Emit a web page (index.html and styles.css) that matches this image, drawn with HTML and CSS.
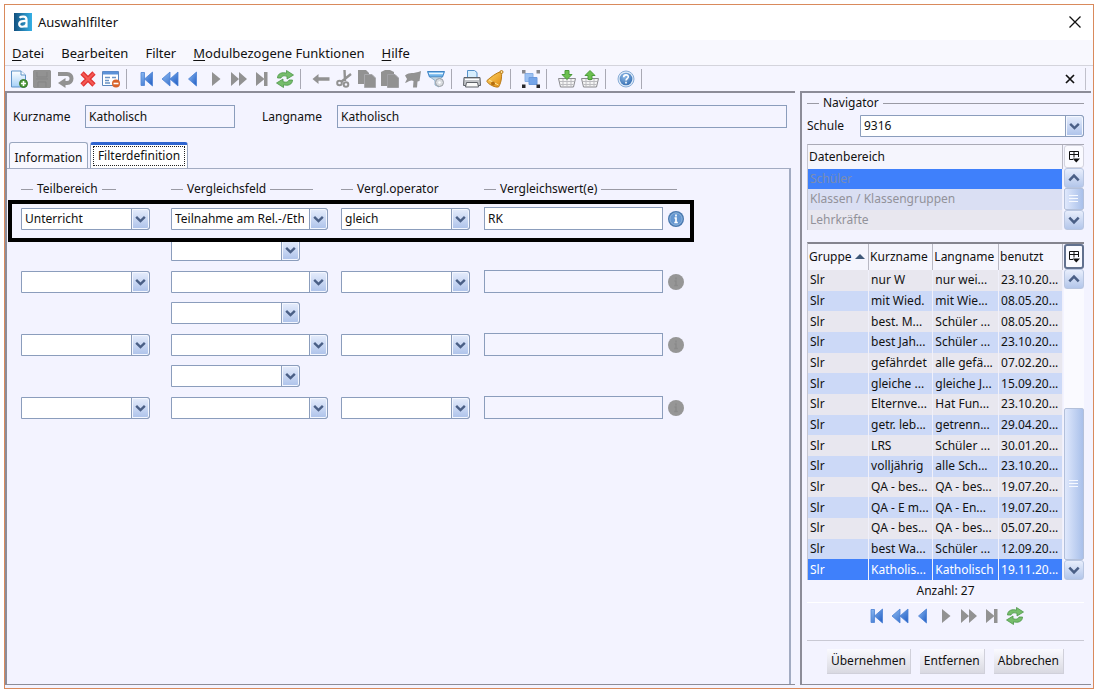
FILE: index.html
```html
<!DOCTYPE html>
<html lang="de">

<head>
  <meta charset="UTF-8">
  <meta name="viewport" content="width=device-width, initial-scale=1.0">
  <title>Auswahlfilter</title>
  <link rel="stylesheet" href="styles.css">
</head>

<body>
  <!-- icon sprite -->
  <svg class="sprite" aria-hidden="true">
    <defs>
      <linearGradient id="g-blue" x1="0" y1="0" x2="1" y2="1">
        <stop offset="0" stop-color="#8fbcf2"></stop>
        <stop offset="1" stop-color="#1f5cc4"></stop>
      </linearGradient>
      <linearGradient id="g-page" x1="0" y1="0" x2="0" y2="1">
        <stop offset="0" stop-color="#fff"></stop>
        <stop offset="1" stop-color="#a4d0f8"></stop>
      </linearGradient>
      <linearGradient id="g-logo" x1="0" y1="0" x2="1" y2="0">
        <stop offset="0" stop-color="#12507e"></stop>
        <stop offset="1" stop-color="#35b0e6"></stop>
      </linearGradient>
      <linearGradient id="g-gold" x1="0" y1="0" x2="1" y2="1">
        <stop offset="0" stop-color="#ffd86a"></stop>
        <stop offset="1" stop-color="#e08a10"></stop>
      </linearGradient>
      <radialGradient id="g-ball" cx=".4" cy=".3" r=".8">
        <stop offset="0" stop-color="#8fbbe8"></stop>
        <stop offset="1" stop-color="#2f68ae"></stop>
      </radialGradient>
    </defs>
    <symbol id="i-logo" viewBox="0 0 18 18">
      <path d="M0 0h18v18H0z" fill="url(#g-logo)"></path>
      <path d="M5.500 4.700C7 3.300 12.500 2.500 12.500 6.500v8M12.500 8C9 7.800 5.200 8.100 5.200 11.100c0 3.600 5.800 3.400 7.300 0" fill="none" stroke="#fff" stroke-width="2.200"></path>
    </symbol>
    <symbol id="i-new" viewBox="0 0 18 18">
      <path d="M1.500 1h9.500l4.500 4v12h-14z" fill="url(#g-page)" stroke="#5f93c8"></path>
      <path d="M11 1v4h4.500" fill="#fff" stroke="#5f93c8"></path>
      <circle cx="13.500" cy="13.500" r="4" fill="#4d9a38" stroke="#37752a"></circle>
      <path d="M13.500 11v5M11 13.500h5" stroke="#fff" stroke-width="1.600"></path>
    </symbol>
    <symbol id="i-save" viewBox="0 0 18 18">
      <path d="M1 0h16l1 1v16l-1 1H1l-1-1V1z" fill="#929292"></path>
      <path d="M3 9h12M4 2v5h10V2M5 17v-5h8v5" fill="none" stroke="#858585"></path>
    </symbol>
    <symbol id="i-undo" viewBox="0 0 18 18">
      <path d="M2 4h9c6 0 6 9 0 9H9" fill="none" stroke="#929292" stroke-width="4"></path>
      <path d="M2 13l7.500-5v10z" fill="#929292"></path>
    </symbol>
    <symbol id="i-delete" viewBox="0 0 18 18">
      <path d="M3 3l12 12M15 3L3 15" stroke="#e23434" stroke-width="4.600"></path>
      <path d="M3.500 3.500l11 11M14.500 3.500l-11 11" stroke="#f55a55" stroke-width="2"></path>
    </symbol>
    <symbol id="i-form" viewBox="0 0 18 18">
      <path d="M.5 1.500h16v14H.5z" fill="#fff" stroke="#5b86bd"></path>
      <path d="M1 3h15" stroke="#5b91d8" stroke-width="3"></path>
      <path d="M3 7.500h5M3 10.500h4M10 7.500h4M3 13h5" stroke="#6b93c4" stroke-width="1.500"></path>
      <circle cx="14" cy="13.500" r="4" fill="#d9632a"></circle>
      <path d="M11.500 13.500h5" stroke="#fff" stroke-width="1.600"></path>
    </symbol>
    <symbol id="i-first" viewBox="0 0 18 18">
      <path d="M3 2.500h3.500v13H3zM14.500 2v14L6.500 9z" fill="url(#g-blue)" stroke="#4b82d4" stroke-width=".8"></path>
    </symbol>
    <symbol id="i-rewind" viewBox="0 0 18 18">
      <path d="M9 2v14L1 9zM17 2v14L9 9z" fill="url(#g-blue)" stroke="#4b82d4" stroke-width=".8"></path>
    </symbol>
    <symbol id="i-prev" viewBox="0 0 18 18">
      <path d="M12.500 2v14L4.500 9z" fill="url(#g-blue)" stroke="#4b82d4" stroke-width=".8"></path>
    </symbol>
    <symbol id="i-next" viewBox="0 0 18 18">
      <path d="M5 2v14l8.500-7z" fill="#929292"></path>
    </symbol>
    <symbol id="i-forward" viewBox="0 0 18 18">
      <path d="M1 2v14l8-7zM9 2v14l8-7z" fill="#929292"></path>
    </symbol>
    <symbol id="i-last" viewBox="0 0 18 18">
      <path d="M3 2v14l8.500-7zM11 2h3.500v14H11z" fill="#929292"></path>
    </symbol>
    <symbol id="i-refresh" viewBox="0 0 18 18">
      <path d="M1.500 8C1.500 3.500 6 1.800 10.500 3.200V.5L17.500 5l-6.500 4V6.300C8 5.300 5.500 5.800 5 8z" fill="#76bd6b" stroke="#4b9647" stroke-width=".8"></path>
      <path d="M16.500 10c0 4.500-4.500 6.200-9 4.800v2.700L.5 13 7 9v2.700c3 1 5.500.5 6-1.700z" fill="#76bd6b" stroke="#4b9647" stroke-width=".8"></path>
    </symbol>
    <symbol id="i-back" viewBox="0 0 18 18">
      <path d="M.5 9l6-5v3.200h11v3.600h-11V14z" fill="#929292"></path>
    </symbol>
    <symbol id="i-cut" viewBox="0 0 18 18">
      <path d="M9.500 0L10 11M16 4L6 12" stroke="#929292" stroke-width="2.400"></path>
      <circle cx="4.500" cy="13" r="2.300" fill="none" stroke="#929292" stroke-width="2"></circle>
      <circle cx="11" cy="14.500" r="2.300" fill="none" stroke="#929292" stroke-width="2"></circle>
    </symbol>
    <symbol id="i-copy" viewBox="0 0 18 18">
      <path d="M0 0h8l3 3v11H0z" fill="#929292"></path>
      <path d="M6.500 4.500H14L17.500 8v9.500h-11z" fill="#929292" stroke="#a9a9ad"></path>
    </symbol>
    <symbol id="i-paste" viewBox="0 0 18 18">
      <path d="M0 2l4-2h5l4 2v14H0z" fill="#929292"></path>
      <path d="M6.500 4.500H14L17.500 8v9.500h-11z" fill="#929292" stroke="#a0a0a4"></path>
    </symbol>
    <symbol id="i-flag" viewBox="0 0 18 18">
      <path d="M1 5.500C6 1.500 9 4.500 17 1l-1.500 10-2 .5-.5 6H9l.5-6.500C7 9.500 5 11.500 1 13l2-4z" fill="#929292"></path>
    </symbol>
    <symbol id="i-filter" viewBox="0 0 18 18">
      <path d="M.5 1.500h17l-2 5.500h-13z" fill="#6fb4ea" stroke="#3f83c4"></path>
      <path d="M2 3.500h14" stroke="#e8f6ff" stroke-width="1.500"></path>
      <path d="M3 7h12l-3 3.500V17l-4-2v-4.500z" fill="#c5d5e0" stroke="#6d9cc0" stroke-width=".7"></path>
      <circle cx="12.500" cy="12.500" r="4" fill="#d9dce0" stroke="#9a9ea4"></circle>
      <circle cx="12.500" cy="12.500" r="1.200" fill="#fff"></circle>
    </symbol>
    <symbol id="i-print" viewBox="0 0 18 18">
      <path d="M4.500 8V.5h7l2.500 2V8z" fill="#d7eefe" stroke="#5692ca"></path>
      <path d="M1 7.500h16l.5 8H.5z" fill="#c3c5c9" stroke="#5e6268"></path>
      <path d="M2 9.500h14" stroke="#fff"></path>
      <path d="M3.500 12.500h11l1 4.500h-13z" fill="#fafafa" stroke="#5e6268"></path>
    </symbol>
    <symbol id="i-bell" viewBox="0 0 18 18">
      <path d="M15 1.500C10 3 5 7 1 10.500c-1.500 2 7.500 7.500 11.500 6.500 2-3 3.500-8 3-15z" fill="url(#g-gold)" stroke="#b97a18"></path>
      <path d="M3 10l9.500 5" stroke="#ffe99c"></path>
      <circle cx="15.500" cy="2" r="1.500" fill="#fbe3a0" stroke="#b97a18"></circle>
      <circle cx="7" cy="13.500" r="2" fill="#b56f10"></circle>
    </symbol>
    <symbol id="i-bounds" viewBox="0 0 18 18">
      <path d="M3 3.500h8v8H3z" fill="#9cc1f2" stroke="#86aee6"></path>
      <path d="M7 7.500h8v7H7z" fill="#74a4e8" stroke="#6a98dc"></path>
      <path d="M0 0h3.500v3.500H0zM14.500 0H18v3.500h-3.500z" fill="#86868c"></path>
      <path d="M0 14.500h3.500V18H0zM14.500 14.500H18V18h-3.500z" fill="#26262a"></path>
    </symbol>
    <symbol id="i-basket" viewBox="0 0 18 18">
      <path d="M.5 8.500h17l-2 8.500h-13z" fill="#f4f4f4" stroke="#8a8a8e"></path>
      <path d="M2 11.500h14M2.500 14.500h13M5 9v8M9 9v8M13 9v8" stroke="#bcbcc0"></path>
    </symbol>
    <symbol id="i-basket-in" viewBox="0 0 18 18">
      <use href="#i-basket"></use>
      <path d="M7 .5h4v4h3l-5 5-5-5h3z" fill="#6cc04f" stroke="#4a9a3a"></path>
    </symbol>
    <symbol id="i-basket-out" viewBox="0 0 18 18">
      <use href="#i-basket"></use>
      <path d="M7 9.500h4V5.500h3l-5-5-5 5h3z" fill="#6cc04f" stroke="#4a9a3a"></path>
    </symbol>
    <symbol id="i-help" viewBox="0 0 18 18">
      <circle cx="9" cy="9" r="8" fill="#dce9f8" stroke="#8aaed8"></circle>
      <circle cx="9" cy="9" r="6.300" fill="url(#g-ball)"></circle>
      <path d="M6.700 7.300C6.700 4 11.500 4.200 11.300 7 11.200 8.600 9 8.600 9 10.500M9 11.700v1.800" fill="none" stroke="#fff" stroke-width="1.600"></path>
    </symbol>
    <symbol id="i-info" viewBox="0 0 16 16">
      <circle cx="8" cy="8" r="8" fill="#4777ae"></circle>
      <circle cx="8" cy="8" r="6.200" fill="#6496d0" stroke="#a9c8e8" stroke-width=".7"></circle>
      <path d="M8 3.500v2M6.500 7H8v4.500M6.300 11.500h3.500" fill="none" stroke="#fff" stroke-width="1.700"></path>
    </symbol>
    <symbol id="i-info-off" viewBox="0 0 16 16">
      <circle cx="8" cy="8" r="8" fill="#969696"></circle>
      <path d="M8 3.500v2M6.500 7H8v4.500M6.300 11.500h3.500" fill="none" stroke="#8a8a8a" stroke-width="1.500"></path>
    </symbol>
    <symbol id="i-columns" viewBox="0 0 12 12">
      <path d="M5 8.500H1.500v-8h9V6M1.500 3.500h9M6 .5v6" fill="none" stroke="#111"></path>
      <path d="M4.500 7.500H12L8.300 11.500z" fill="#111"></path>
    </symbol>
    <symbol id="i-down" viewBox="0 0 12 12">
      <path d="M2 4l4 4 4-4" fill="none" stroke="#4a5f86" stroke-width="2.200"></path>
    </symbol>
    <symbol id="i-up" viewBox="0 0 12 12">
      <path d="M2 8l4-4 4 4" fill="none" stroke="#4a5f86" stroke-width="2.200"></path>
    </symbol>
    <symbol id="i-close" viewBox="0 0 12 12">
      <path d="M.5.500l11 11M11.500.5l-11 11" stroke="currentColor" stroke-width="1.300"></path>
    </symbol>
    <symbol id="i-close-small" viewBox="0 0 12 12">
      <path d="M2 2l8 8M10 2l-8 8" stroke="currentColor" stroke-width="1.700"></path>
    </symbol>
  </svg>

  <div class="window">
    <header class="titlebar">
      <svg class="icon"><use href="#i-logo"></use></svg>
      <h1>Auswahlfilter</h1>
      <button class="win-close" aria-label="Fenster schließen"><svg><use href="#i-close"></use></svg></button>
    </header>

    <nav class="menubar">
      <button><u>D</u>atei</button>
      <button>Be<u>a</u>rbeiten</button>
      <button>Filter</button>
      <button><u>M</u>odulbezogene Funktionen</button>
      <button><u>H</u>ilfe</button>
    </nav>

    <div class="toolbar">
      <button aria-label="Neu"><svg class="icon"><use href="#i-new"></use></svg></button>
      <button aria-label="Speichern"><svg class="icon"><use href="#i-save"></use></svg></button>
      <button aria-label="Rückgängig"><svg class="icon"><use href="#i-undo"></use></svg></button>
      <button aria-label="Löschen"><svg class="icon"><use href="#i-delete"></use></svg></button>
      <button aria-label="Maske leeren"><svg class="icon"><use href="#i-form"></use></svg></button>
      <span class="sep"></span>
      <button aria-label="Erster"><svg class="icon"><use href="#i-first"></use></svg></button>
      <button aria-label="Zurückblättern"><svg class="icon"><use href="#i-rewind"></use></svg></button>
      <button aria-label="Voriger"><svg class="icon"><use href="#i-prev"></use></svg></button>
      <button aria-label="Nächster"><svg class="icon"><use href="#i-next"></use></svg></button>
      <button aria-label="Vorblättern"><svg class="icon"><use href="#i-forward"></use></svg></button>
      <button aria-label="Letzter"><svg class="icon"><use href="#i-last"></use></svg></button>
      <button aria-label="Aktualisieren"><svg class="icon"><use href="#i-refresh"></use></svg></button>
      <span class="sep"></span>
      <button aria-label="Zurück"><svg class="icon"><use href="#i-back"></use></svg></button>
      <button aria-label="Ausschneiden"><svg class="icon"><use href="#i-cut"></use></svg></button>
      <button aria-label="Kopieren"><svg class="icon"><use href="#i-copy"></use></svg></button>
      <button aria-label="Einfügen"><svg class="icon"><use href="#i-paste"></use></svg></button>
      <button aria-label="Markieren"><svg class="icon"><use href="#i-flag"></use></svg></button>
      <button aria-label="Filtern"><svg class="icon"><use href="#i-filter"></use></svg></button>
      <span class="sep"></span>
      <button aria-label="Drucken"><svg class="icon"><use href="#i-print"></use></svg></button>
      <button aria-label="Erinnerung"><svg class="icon"><use href="#i-bell"></use></svg></button>
      <span class="sep"></span>
      <button aria-label="Auswahl"><svg class="icon"><use href="#i-bounds"></use></svg></button>
      <span class="sep"></span>
      <button aria-label="In den Korb"><svg class="icon"><use href="#i-basket-in"></use></svg></button>
      <button aria-label="Aus dem Korb"><svg class="icon"><use href="#i-basket-out"></use></svg></button>
      <span class="sep"></span>
      <button aria-label="Hilfe"><svg class="icon"><use href="#i-help"></use></svg></button>
      <span class="sep"></span>
      <button class="tool-close" aria-label="Schließen"><svg><use href="#i-close-small"></use></svg></button>
    </div>

    <div class="content">
      <main class="editor">
        <div class="names">
          <label for="kurzname">Kurzname</label>
          <input class="field short" id="kurzname" value="Katholisch" readonly>
          <label class="second" for="langname">Langname</label>
          <input class="field long" id="langname" value="Katholisch" readonly>
        </div>

        <div class="tabs" role="tablist">
          <button class="tab" role="tab">Information</button>
          <button class="tab active" role="tab" aria-selected="true"><span>Filterdefinition</span></button>
        </div>

        <section class="pane">
          <div class="row legends">
            <div class="legend l-area">Teilbereich</div>
            <div class="legend l-field">Vergleichsfeld</div>
            <div class="legend l-op">Vergl.operator</div>
            <div class="legend l-value">Vergleichswert(e)</div>
          </div>

          <div class="row marked">
            <span class="combo"><select aria-label="Teilbereich"><option>Unterricht</option></select><svg><use href="#i-down"></use></svg></span>
            <span class="combo"><select aria-label="Vergleichsfeld"><option>Teilnahme am Rel.-/Ethikunterricht</option></select><svg><use href="#i-down"></use></svg></span>
            <span class="combo"><select aria-label="Vergleichsoperator"><option>gleich</option></select><svg><use href="#i-down"></use></svg></span>
            <input class="field editable" aria-label="Vergleichswert" value="RK">
            <button class="info" aria-label="Info"><svg><use href="#i-info"></use></svg></button>
          </div>
          <div class="row link">
            <span class="combo"><select aria-label="Verknüpfung"><option></option></select><svg><use href="#i-down"></use></svg></span>
          </div>

          <div class="row">
            <span class="combo"><select aria-label="Teilbereich"><option></option></select><svg><use href="#i-down"></use></svg></span>
            <span class="combo"><select aria-label="Vergleichsfeld"><option></option></select><svg><use href="#i-down"></use></svg></span>
            <span class="combo"><select aria-label="Vergleichsoperator"><option></option></select><svg><use href="#i-down"></use></svg></span>
            <input class="field" aria-label="Vergleichswert" readonly>
            <button class="info" aria-label="Info"><svg><use href="#i-info-off"></use></svg></button>
          </div>
          <div class="row link">
            <span class="combo"><select aria-label="Verknüpfung"><option></option></select><svg><use href="#i-down"></use></svg></span>
          </div>

          <div class="row">
            <span class="combo"><select aria-label="Teilbereich"><option></option></select><svg><use href="#i-down"></use></svg></span>
            <span class="combo"><select aria-label="Vergleichsfeld"><option></option></select><svg><use href="#i-down"></use></svg></span>
            <span class="combo"><select aria-label="Vergleichsoperator"><option></option></select><svg><use href="#i-down"></use></svg></span>
            <input class="field" aria-label="Vergleichswert" readonly>
            <button class="info" aria-label="Info"><svg><use href="#i-info-off"></use></svg></button>
          </div>
          <div class="row link">
            <span class="combo"><select aria-label="Verknüpfung"><option></option></select><svg><use href="#i-down"></use></svg></span>
          </div>

          <div class="row">
            <span class="combo"><select aria-label="Teilbereich"><option></option></select><svg><use href="#i-down"></use></svg></span>
            <span class="combo"><select aria-label="Vergleichsfeld"><option></option></select><svg><use href="#i-down"></use></svg></span>
            <span class="combo"><select aria-label="Vergleichsoperator"><option></option></select><svg><use href="#i-down"></use></svg></span>
            <input class="field" aria-label="Vergleichswert" readonly>
            <button class="info" aria-label="Info"><svg><use href="#i-info-off"></use></svg></button>
          </div>
        </section>
      </main>

      <aside class="navigator">
        <div class="legend">Navigator</div>
        <div class="school">
          <label for="schule">Schule</label>
          <span class="combo"><select id="schule"><option>9316</option></select><svg><use href="#i-down"></use></svg></span>
        </div>

        <div class="list areas">
          <table>
            <thead>
              <tr><th>Datenbereich</th></tr>
            </thead>
            <tbody>
              <tr class="selected"><td>Schüler</td></tr>
              <tr><td>Klassen / Klassengruppen</td></tr>
              <tr><td>Lehrkräfte</td></tr>
            </tbody>
          </table>
          <div class="rail">
            <button class="columns" aria-label="Spalten"><svg><use href="#i-columns"></use></svg></button>
            <button class="step" aria-label="Nach oben"><svg><use href="#i-up"></use></svg></button>
            <div class="track"><div class="thumb"></div></div>
            <button class="step" aria-label="Nach unten"><svg><use href="#i-down"></use></svg></button>
          </div>
        </div>

        <div class="list filters">
          <table>
            <thead>
              <tr><th>Gruppe<i class="sort"></i></th><th>Kurzname</th><th>Langname</th><th>benutzt</th></tr>
            </thead>
            <tbody>
              <tr><td>Slr</td><td>nur W</td><td>nur wei...</td><td>23.10.20...</td></tr>
              <tr><td>Slr</td><td>mit Wied.</td><td>mit Wie...</td><td>08.05.20...</td></tr>
              <tr><td>Slr</td><td>best. M...</td><td>Schüler ...</td><td>08.05.20...</td></tr>
              <tr><td>Slr</td><td>best Jah...</td><td>Schüler ...</td><td>23.10.20...</td></tr>
              <tr><td>Slr</td><td>gefährdet</td><td>alle gefä...</td><td>07.02.20...</td></tr>
              <tr><td>Slr</td><td>gleiche ...</td><td>gleiche J...</td><td>15.09.20...</td></tr>
              <tr><td>Slr</td><td>Elternve...</td><td>Hat Fun...</td><td>23.10.20...</td></tr>
              <tr><td>Slr</td><td>getr. leb...</td><td>getrenn...</td><td>29.04.20...</td></tr>
              <tr><td>Slr</td><td>LRS</td><td>Schüler ...</td><td>30.01.20...</td></tr>
              <tr><td>Slr</td><td>volljährig</td><td>alle Sch...</td><td>23.10.20...</td></tr>
              <tr><td>Slr</td><td>QA - bes...</td><td>QA - bes...</td><td>19.07.20...</td></tr>
              <tr><td>Slr</td><td>QA - E m...</td><td>QA - En...</td><td>19.07.20...</td></tr>
              <tr><td>Slr</td><td>QA - bes...</td><td>QA - bes...</td><td>05.07.20...</td></tr>
              <tr><td>Slr</td><td>best Wa...</td><td>Schüler ...</td><td>12.09.20...</td></tr>
              <tr class="selected"><td>Slr</td><td>Katholis...</td><td>Katholisch</td><td>19.11.20...</td></tr>
            </tbody>
          </table>
          <div class="rail">
            <button class="columns focus" aria-label="Spalten"><svg><use href="#i-columns"></use></svg></button>
            <button class="step" aria-label="Nach oben"><svg><use href="#i-up"></use></svg></button>
            <div class="track"><div class="thumb"></div></div>
            <button class="step" aria-label="Nach unten"><svg><use href="#i-down"></use></svg></button>
          </div>
        </div>

        <div class="count">Anzahl: 27</div>

        <div class="pager">
          <button aria-label="Erster"><svg class="icon"><use href="#i-first"></use></svg></button>
          <button aria-label="Zurückblättern"><svg class="icon"><use href="#i-rewind"></use></svg></button>
          <button aria-label="Voriger"><svg class="icon"><use href="#i-prev"></use></svg></button>
          <button aria-label="Nächster"><svg class="icon"><use href="#i-next"></use></svg></button>
          <button aria-label="Vorblättern"><svg class="icon"><use href="#i-forward"></use></svg></button>
          <button aria-label="Letzter"><svg class="icon"><use href="#i-last"></use></svg></button>
          <button aria-label="Aktualisieren"><svg class="icon"><use href="#i-refresh"></use></svg></button>
        </div>

        <div class="actions">
          <button>Übernehmen</button>
          <button>Entfernen</button>
          <button>Abbrechen</button>
        </div>
      </aside>
    </div>
  </div>
</body>

</html>
```
FILE: styles.css
```css
*,
*::before,
*::after {
  box-sizing: border-box;
}

body {
  margin: 0;
  padding: 4px 5px 5px 4px;
  background: #fff;
  color: #111;
  font: 12px/16px "Noto Sans", "Open Sans", sans-serif;
}

button,
input,
select {
  font: inherit;
  color: inherit;
}

button {
  padding: 0;
  border: none;
  background: none;
}

.sprite {
  position: absolute;
  width: 0;
  height: 0;
}

.icon {
  display: block;
  flex: none;
  width: 18px;
  height: 18px;
}

.window {
  display: flex;
  flex-direction: column;
  min-height: calc(100vh - 9px);
  border: 1px solid #d98a5c;
  background: #f3f3ff;
}

/* title, menu, toolbar */
.titlebar {
  display: flex;
  align-items: center;
  height: 35px;
  padding: 0 12px 2px 9px;
  background: #fff;
}

.titlebar h1 {
  flex: 1;
  margin: 0 0 0 6px;
  font-size: 13px;
  font-weight: normal;
}

.win-close svg {
  display: block;
  width: 12px;
  height: 12px;
}

.menubar {
  display: flex;
  align-items: center;
  gap: 17px;
  height: 26px;
  padding-left: 7px;
  background: #f8f8fe;
  border-bottom: 1px solid #d4d4dc;
  font-size: 13px;
}

.menubar u {
  text-underline-offset: 2px;
}

.toolbar {
  display: flex;
  align-items: center;
  height: 25px;
  padding: 0 7px 0 2px;
  background: #f5f5ff;
}

.toolbar button,
.pager button {
  display: flex;
  align-items: center;
  justify-content: center;
  width: 23px;
  height: 22px;
}

.sep {
  width: 1px;
  height: 20px;
  margin: 0 8px 0 4px;
  background: #a9a9b4;
}

.toolbar .tool-close {
  width: 31px;
  margin-left: auto;
  border-right: 1px solid #c0c0cb;
}

.tool-close svg {
  width: 12px;
  height: 12px;
}

.content {
  flex: 1;
  display: flex;
  gap: 5px;
  padding: 0 2px 3px 0;
}

/* left side */
.editor {
  flex: 1;
  min-width: 0;
  display: flex;
  flex-direction: column;
  border: 1px solid #8c8c98;
  border-width: 2px 0 1px 2px;
  padding: 12px 4px 0 0;
}

.names {
  display: flex;
  align-items: center;
  padding: 0 4px 0 6px;
}

.names label {
  width: 72px;
}

.names .second {
  width: 75px;
  margin-left: 27px;
}

.field {
  height: 23px;
  min-width: 0;
  padding: 0 3px;
  border: 1px solid #8b9dbc;
  border-radius: 0;
  background: #f4f4ff;
  outline: none;
}

.field.short {
  width: 150px;
}

.field.long {
  flex: 1;
}

.field.editable {
  background: #fff;
}

.tabs {
  display: flex;
  align-items: flex-end;
  gap: 2px;
  margin-top: 14px;
  padding-left: 2px;
}

.tab {
  width: 79px;
  height: 26px;
  padding-top: 4px;
  border: 1px solid #9aa7bf;
  border-bottom: none;
  border-radius: 3px 3px 0 0;
  background: #f8f8ff;
}

.tab.active {
  width: 98px;
  padding: 0 2px 2px;
  border-top: 3px solid #2f65d0;
  background: #fff;
}

.tab.active span {
  display: block;
  height: 20px;
  border: 1px dotted #222;
  line-height: 18px;
}

.pane {
  flex: 1;
  border: 1px solid #a2abc2;
  border-width: 1px 2px 0 0;
  padding: 12px 0 12px 14px;
}

.row {
  display: grid;
  grid-template-columns: 150px 170px 143px 184px 16px;
  align-items: center;
  margin-bottom: 9px;
}

.row .combo:nth-child(1) {
  width: 129px;
}

.row .combo:nth-child(2) {
  width: 157px;
}

.row .combo:nth-child(3) {
  width: 129px;
}

.row .field {
  width: 179px;
}

.row.link .combo {
  grid-column: 2;
}

.row.legends {
  margin-bottom: 10px;
}

/* frame around the active condition */
.row.marked {
  position: relative;
  z-index: 1;
}

.row.marked::after {
  content: "";
  position: absolute;
  top: -7px;
  left: -13px;
  width: 686px;
  height: 42px;
  border: 4px solid #000;
  pointer-events: none;
}

.legend {
  display: flex;
  align-items: center;
  gap: 4px;
}

.legend::before,
.legend::after {
  content: "";
  height: 1px;
  background: #9a9aa4;
}

.legend::before {
  width: 12px;
}

.legend::after {
  flex: 1;
}

.l-area {
  width: 95px;
}

.l-field {
  width: 142px;
}

.l-op::after {
  display: none;
}

.l-value {
  width: 193px;
}

.combo {
  position: relative;
  display: block;
  height: 22px;
}

.combo select {
  display: block;
  width: 100%;
  height: 22px;
  padding: 0 23px 0 3px;
  border: 1px solid #8b9dbc;
  border-radius: 0 3px 3px 0;
  background: #fff;
  appearance: none;
  outline: none;
  overflow: hidden;
  text-overflow: clip;
}

.combo svg {
  position: absolute;
  top: 0;
  right: 0;
  width: 19px;
  height: 22px;
  padding: 3px 2px;
  border: 1px solid #8b9dbc;
  border-radius: 0 3px 3px 0;
  background: linear-gradient(#e6edfc, #adc2ea);
  box-shadow: inset 0 0 0 1px #f4f7ff;
  pointer-events: none;
}

.info svg {
  display: block;
  width: 16px;
  height: 16px;
}

/* right side */
.navigator {
  width: 291px;
  padding: 2px 7px 0 5px;
  border: solid #8c8c98;
  border-width: 2px 0 1px 2px;
}

.school {
  display: flex;
  align-items: center;
  margin-top: 4px;
}

.school label {
  width: 53px;
}

.school .combo {
  flex: 1;
}

.list {
  display: flex;
  gap: 1px;
  border-left: 1px solid #c6c6d0;
}

.areas {
  height: 86px;
  margin-top: 7px;
  border-top: 1px solid #aaaab6;
}

.filters {
  height: 338px;
  margin-top: 12px;
  border-top: 2px solid #85858f;
}

.list table {
  flex: 1;
  height: 100%;
  border-collapse: collapse;
  table-layout: fixed;
}

.list th,
.list td {
  padding: 0 0 0 2px;
  font-weight: normal;
  text-align: left;
  white-space: nowrap;
  overflow: hidden;
  border-right: 1px solid #f0f0fa;
}

.list th {
  height: 24px;
  padding-left: 1px;
  border-right-color: #b9b9c4;
  background: #f5f5fd;
}

.filters th {
  height: 26px;
}

.list tbody tr {
  background: #e8e7ef;
}

.list tbody tr:nth-child(even) {
  background: #ccd9f7;
}

.list tbody tr.selected {
  background: #3f80fb;
  color: #fff;
}

.areas tbody tr td {
  color: #92929a;
}

.areas tbody tr:nth-child(even) {
  background: #dadff3;
}

.areas tbody tr.selected td {
  color: #7b8db2;
}

.sort {
  display: inline-block;
  margin-left: 3px;
  border: 5px solid transparent;
  border-top: none;
  border-bottom-color: #3f5878;
  vertical-align: 2px;
}

.rail {
  display: flex;
  flex-direction: column;
  width: 20px;
}

.columns {
  display: flex;
  align-items: center;
  justify-content: center;
  height: 23px;
  border: 1px solid #d3d3de;
  border-radius: 3px;
  background: #fafaff;
}

.columns.focus {
  height: 25px;
  border: 2px solid #62718f;
}

.columns svg {
  flex: none;
  width: 12px;
  height: 12px;
}

.step {
  display: flex;
  align-items: center;
  justify-content: center;
  height: 20px;
  border: 1px solid #b9c6e0;
  border-radius: 3px;
  background: linear-gradient(#e8eefc, #b3c6ea);
}

.step svg {
  width: 14px;
  height: 14px;
}

.track {
  flex: 1;
  display: flex;
  flex-direction: column;
  justify-content: flex-end;
  background: #fafaff;
}

.thumb {
  position: relative;
  border: 1px solid #b3c0da;
  border-radius: 2px;
  background: linear-gradient(90deg, #dfe8fc, #a9c0ea);
}

.filters .thumb {
  height: 56%;
}

.areas .thumb {
  height: 100%;
}

/* grip lines */
.thumb::after {
  content: "";
  position: absolute;
  top: calc(50% - 4px);
  left: 4px;
  width: 9px;
  height: 9px;
  background: repeating-linear-gradient(#f6f9ff 0 1px, transparent 1px 3px);
}

.count {
  margin-top: 3px;
  padding-bottom: 3px;
  text-align: center;
  border-bottom: 1px solid #fff;
}

.pager {
  display: flex;
  justify-content: center;
  padding: 2px 0 13px;
  border-bottom: 1px solid #c9c9d4;
}

.actions {
  display: flex;
  justify-content: center;
  gap: 9px;
  padding: 8px 0 10px;
}

.actions button {
  height: 25px;
  padding: 0 4px;
  border: 1px solid #d0d0da;
  border-width: 0 1px 1px 0;
  background: linear-gradient(#fafaff, #d9d9e1);
}
```
